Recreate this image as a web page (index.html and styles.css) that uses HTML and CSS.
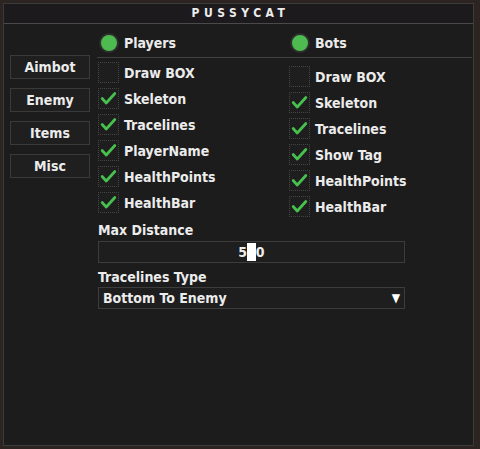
FILE: index.html
```html
<!DOCTYPE html>
<html lang="en">
<head>
  <meta charset="UTF-8" />
  <title>PUSSYCAT</title>
  <link rel="stylesheet" href="styles.css">
</head>
<body>
  <div class="window">
    <div class="title-bar">PUSSYCAT</div>

    <div class="window-body">
      <nav class="side-nav">
        <button class="nav-btn">Aimbot</button>
        <button class="nav-btn">Enemy</button>
        <button class="nav-btn">Items</button>
        <button class="nav-btn">Misc</button>
      </nav>

      <main class="content">
        <div class="columns">
          <div class="col-head"><span class="radio"></span>Players</div>
          <div class="col-head"><span class="radio"></span>Bots</div>

          <ul class="opt-list players">
            <li><span class="box"></span>Draw BOX</li>
            <li><span class="box on"></span>Skeleton</li>
            <li><span class="box on"></span>Tracelines</li>
            <li><span class="box on"></span>PlayerName</li>
            <li><span class="box on"></span>HealthPoints</li>
            <li><span class="box on"></span>HealthBar</li>
          </ul>

          <ul class="opt-list bots">
            <li><span class="box"></span>Draw BOX</li>
            <li><span class="box on"></span>Skeleton</li>
            <li><span class="box on"></span>Tracelines</li>
            <li><span class="box on"></span>Show Tag</li>
            <li><span class="box on"></span>HealthPoints</li>
            <li><span class="box on"></span>HealthBar</li>
          </ul>
        </div>

        <div class="settings">
          <label class="field-label">Max Distance</label>
          <div class="slider">
            <span class="slider-value">500</span>
            <span class="grab"></span>
          </div>

          <label class="field-label second">Tracelines Type</label>
          <div class="combo">
            <span>Bottom To Enemy</span>
            <span class="arrow">&#9660;</span>
          </div>
        </div>
      </main>
    </div>
  </div>

  <script>
    // draw the tick inside every checked box
    const tick = '<svg width="21" height="21" viewBox="0 0 21 21"><path d="M3.5 10.5 L8 15.5 L17.5 5" fill="none" stroke="#48c04e" stroke-width="3" stroke-linecap="round" stroke-linejoin="round"/></svg>';
    document.querySelectorAll(".box.on").forEach(b => { b.innerHTML = tick; });
  </script>
</body>
</html>
```

FILE: styles.css
```css
* { margin: 0; padding: 0; box-sizing: border-box; }

html, body {
  height: 100%;
}

body {
  background: #2b2420;
  padding: 3px 6px 3px 3px;
  font-family: "DejaVu Sans Condensed", "DejaVu Sans", sans-serif;
  font-stretch: condensed;
  font-weight: bold;
  font-size: 14px;
  color: #ececec;
}

.window {
  width: 471px;
  height: 443px;
  background: #1c1c1c;
  border: 1px solid #3b3b3b;
  display: flex;
  flex-direction: column;
}

.title-bar {
  height: 20px;
  background: #1d1a1e;
  border-bottom: 1px solid #4a4a4a;
  text-align: center;
  font-size: 12px;
  line-height: 19px;
  letter-spacing: 4.5px;
  padding-left: 4px;
}

.window-body {
  display: flex;
  padding-left: 6px;
}

/* left menu */
.side-nav {
  width: 80px;
  padding-top: 31px;
  display: flex;
  flex-direction: column;
  gap: 9px;
}

.nav-btn {
  height: 24px;
  background: #1f1f1f;
  border: 1px solid #3a3a3a;
  color: #ececec;
  font: inherit;
  font-stretch: condensed;
  cursor: pointer;
}

.content {
  flex: 1;
  margin-left: 7px;
  padding-right: 1px;
}

.columns {
  display: grid;
  grid-template-columns: 191px 1fr;
}

.col-head {
  display: flex;
  align-items: center;
  gap: 5px;
  padding: 9px 0 4px 2px;
  border-bottom: 1px solid #404040;
  height: 34px;
}

.radio {
  width: 20px;
  height: 20px;
  border-radius: 50%;
  background: #4dbb50;
  border: 2px solid #2e2e2e;
}

.opt-list {
  list-style: none;
  display: flex;
  flex-direction: column;
  gap: 5px;
  padding-left: 1px;
}

.opt-list.players { padding-top: 4px; }
.opt-list.bots { padding-top: 8px; }

.opt-list li {
  display: flex;
  align-items: center;
  gap: 5px;
  height: 21px;
}

.box {
  width: 21px;
  height: 21px;
  border: 1px dotted #444;
  background: #1e1e1e;
  display: flex;
  align-items: center;
  justify-content: center;
}

.box svg {
  display: block;
}

/* bottom settings */
.settings {
  width: 307px;
  margin-left: 1px;
  margin-top: 5px;
  display: flex;
  flex-direction: column;
}

.field-label {
  line-height: 16px;
}

.field-label.second {
  margin-top: 6px;
}

.slider {
  position: relative;
  margin-top: 3px;
  height: 22px;
  border: 1px solid #3c3c3c;
  background: #1e1e1e;
  text-align: center;
  line-height: 20px;
}

.grab {
  position: absolute;
  left: 148px;
  top: 1px;
  width: 9px;
  height: 18px;
  background: #fff;
}

.combo {
  margin-top: 2px;
  height: 22px;
  border: 1px solid #3c3c3c;
  background: #1e1e1e;
  display: flex;
  align-items: center;
  justify-content: space-between;
  padding: 0 4px 0 4px;
}

.arrow {
  font-size: 12px;
  color: #fff;
}
```
